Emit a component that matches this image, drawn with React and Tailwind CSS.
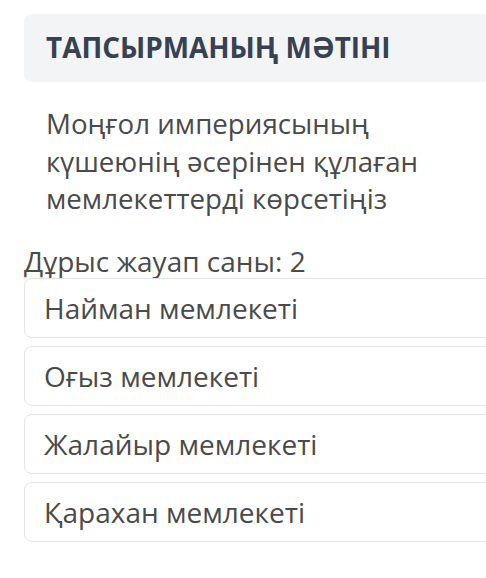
import React from "react";

const options = [
  "Найман мемлекеті",
  "Оғыз мемлекеті",
  "Жалайыр мемлекеті",
  "Қарахан мемлекеті",
];

const App = () => {
  return (
    <div
      className="w-[486px] h-[578px] overflow-hidden bg-white"
      style={{ fontFamily: '"Open Sans", "Noto Sans", sans-serif' }}
    >
      <div className="w-[540px] pl-6 pt-[14px]">
        <div className="h-[68px] rounded-lg bg-[#f3f4f6] flex items-center pl-[22px]">
          <h2 className="text-[27.9px] font-bold uppercase text-[#374151]">
            Тапсырманың мәтіні
          </h2>
        </div>

        <p className="mt-[23px] pl-[22px] pr-[80px] text-[27.7px] leading-[37.5px] text-[#4a4a4a]">
          Моңғол империясының күшеюнің әсерінен құлаған мемлекеттерді көрсетіңіз
        </p>

        <div className="mt-[26px] text-[28px] leading-[34px] text-[#4a4a4a]">
          Дұрыс жауап саны: 2
        </div>

        <div className="flex flex-col gap-2">
          {options.map((opt) => (
            <div
              key={opt}
              className="h-[60px] rounded-lg border border-[#e3e3e3] flex items-center pl-[19px] text-[28px] text-[#4a4a4a]"
            >
              {opt}
            </div>
          ))}
        </div>
      </div>
    </div>
  );
};

export default App;
